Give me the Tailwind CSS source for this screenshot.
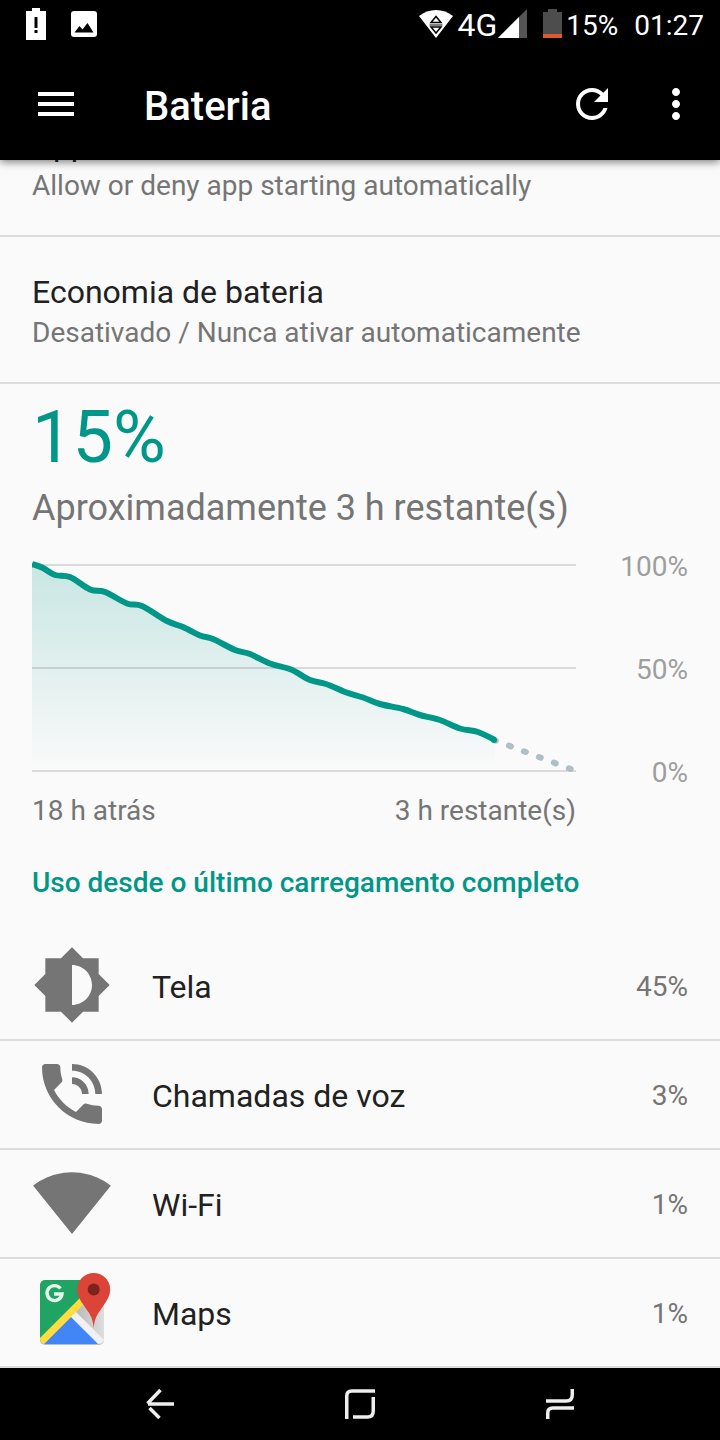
<!DOCTYPE html>
<html lang="pt-BR">
<head>
<meta charset="utf-8">
<meta name="viewport" content="width=device-width, initial-scale=1">
<title>Bateria</title>
<script src="https://cdn.jsdelivr.net/npm/@tailwindcss/browser@4"></script>
</head>
<body class="flex min-h-screen flex-col bg-[#fafafa] font-[Roboto,sans-serif] text-[#212121]">

  <div class="flex h-12 items-center bg-black pr-4 pl-6 text-[28px] leading-8 text-white">
    <svg class="h-8 w-6" viewBox="0 0 24 32" aria-hidden="true">
      <path fill="#fff" fill-rule="evenodd" d="M8 0h8v3h6v29H2V3h6zM10.500 9v11h3V9zM10.500 22v3h3v-3z"/>
    </svg>
    <svg class="ml-5 size-8" viewBox="0 0 32 32" aria-hidden="true">
      <rect x="3" y="3" width="26" height="26" rx="3" fill="#fff"/>
      <path d="M6.500 24.500l5-6.500 3 3.500 5-6.500 6 9.500z" fill="#000"/>
    </svg>
    <div class="ml-auto flex items-center">
      <svg class="h-8 w-9" viewBox="0 0 36 32" aria-hidden="true">
        <path fill="#fff" d="M18 30L1 8C10.500 0 25.500 0 35 8z"/>
        <path fill="none" stroke="#000" stroke-width="1.500" d="M13 14.500h10l-5-6zM13 19h10l-5 6z"/>
        <path stroke="#000" stroke-width="1" d="M11.500 17h13"/>
      </svg>
      <span class="ml-1 pt-0.5 text-[32px]">4G</span>
      <svg class="h-8 w-8" viewBox="0 0 32 32" aria-hidden="true">
        <path fill="#555" d="M30 1v29H1z"/>
        <path fill="#fff" d="M22 9v21H1z"/>
      </svg>
      <svg class="ml-3 h-8 w-6" viewBox="0 0 24 32" aria-hidden="true">
        <path fill="#4d4d4d" d="M7 1h9v3h5v26H2V4h5z"/>
        <path fill="#e0582f" d="M2 26h19v4H2z"/>
      </svg>
      <span class="ml-px pt-1">15%</span>
      <span class="ml-4 pt-1">01:27</span>
    </div>
  </div>

  <header class="relative z-10 flex h-28 items-center bg-black pr-5 pl-8 text-white shadow-[0_2px_8px_rgba(0,0,0,0.5)]">
    <button type="button" aria-label="Menu" class="size-12">
      <svg class="size-12" viewBox="0 0 24 24" fill="currentColor"><path d="M3 18h18v-2H3v2zm0-5h18v-2H3v2zm0-7v2h18V6H3z"/></svg>
    </button>
    <h1 class="ml-16 pt-1.5 text-[40px] leading-12 font-medium">Bateria</h1>
    <button type="button" aria-label="Atualizar" class="ml-auto size-12">
      <svg class="size-12" viewBox="0 0 24 24" fill="currentColor"><path d="M17.650 6.350C16.200 4.900 14.210 4 12 4c-4.420 0-7.990 3.580-7.990 8s3.570 8 7.990 8c3.730 0 6.840-2.550 7.730-6h-2.080c-.82 2.330-3.040 4-5.650 4-3.310 0-6-2.690-6-6s2.690-6 6-6c1.660 0 3.140.69 4.220 1.780L13 11h7V4l-2.350 2.350z"/></svg>
    </button>
    <button type="button" aria-label="Mais opções" class="ml-9 size-12">
      <svg class="size-12" viewBox="0 0 24 24" fill="currentColor"><path d="M12 8c1.100 0 2-.9 2-2s-.9-2-2-2-2 .9-2 2 .9 2 2 2zm0 2c-1.100 0-2 .9-2 2s.9 2 2 2 2-.9 2-2-.9-2-2-2zm0 6c-1.100 0-2 .9-2 2s.9 2 2 2 2-.9 2-2-.9-2-2-2z"/></svg>
    </button>
  </header>

  <main class="flex-1 overflow-hidden">
    <!-- The list is scrolled so that its first item is partly under the app bar -->
    <section class="-mt-[70px]">
      <div class="border-b-2 border-[#dcdcdc] px-8 pt-[35px] pb-7">
        <h2 class="text-[32px] leading-10">App</h2>
        <p class="text-[28px] leading-[42px] text-[#757575]">Allow or deny app starting automatically</p>
      </div>
      <div class="border-b-2 border-[#dcdcdc] px-8 pt-[35px] pb-7">
        <h2 class="text-[32px] leading-10">Economia de bateria</h2>
        <p class="text-[28px] leading-[42px] text-[#757575]">Desativado / Nunca ativar automaticamente</p>
      </div>
    </section>

    <section class="px-8 pt-3.5">
      <p class="text-[72px] leading-20 text-[#009688]">15%</p>
      <p class="pt-1.5 text-[36px] leading-12 text-[#757575]">Aproximadamente 3 h restante(s)</p>
      <div class="mt-[19px] flex">
        <svg class="min-w-0 flex-1" viewBox="0 0 544 238" role="img" aria-label="Nível da bateria nas últimas 18 horas">
          <defs>
            <linearGradient id="fade" gradientUnits="userSpaceOnUse" x1="0" y1="14" x2="0" y2="220">
              <stop offset="0" stop-color="#009688" stop-opacity="0.2"/>
              <stop offset="1" stop-color="#009688" stop-opacity="0"/>
            </linearGradient>
          </defs>
          <path d="M0 14H544M0 117H544M0 220H544" stroke="#dadada" stroke-width="2"/>
          <path id="area" fill="url(#fade)"/>
          <path d="M462 189L544 220" stroke="#b0bec5" stroke-width="6" stroke-linecap="round" stroke-dasharray="2 14"/>
          <path id="level" fill="none" stroke="#009688" stroke-width="6"/>
          <circle cx="462" cy="189" r="3" fill="#009688"/>
        </svg>
        <div class="flex w-28 flex-col justify-between text-right text-[28px] leading-8 text-[#9e9e9e]">
          <span>100%</span><span>50%</span><span>0%</span>
        </div>
      </div>
      <div class="mt-1.5 mr-28 flex justify-between text-[28px] leading-8 text-[#757575]">
        <span>18 h atrás</span><span>3 h restante(s)</span>
      </div>
    </section>

    <section>
      <h2 class="px-8 pt-10 pb-[33px] text-[28px] leading-8 font-medium text-[#009688]">Uso desde o último carregamento completo</h2>
      <ul class="text-[32px] leading-10">
        <li class="flex h-[109px] items-center gap-10 border-b-2 border-[#dcdcdc] px-8 pb-0.5">
          <svg class="size-20" viewBox="0 0 24 24" fill="#757575" aria-hidden="true"><path d="M20 15.310L23.310 12 20 8.690V4h-4.690L12 .69 8.690 4H4v4.690L.69 12 4 15.310V20h4.690L12 23.310 15.310 20H20v-4.690zM12 18V6c3.310 0 6 2.690 6 6s-2.690 6-6 6z"/></svg>
          <span class="flex-1 pt-1">Tela</span>
          <span class="pt-1 text-[28px] text-[#757575]">45%</span>
        </li>
        <li class="flex h-[109px] items-center gap-10 border-b-2 border-[#dcdcdc] px-8 pb-0.5">
          <svg class="size-20" viewBox="0 0 24 24" fill="#757575" aria-hidden="true"><path d="M20 15.500c-1.250 0-2.450-.2-3.570-.57-.35-.11-.74-.03-1.020.24l-2.200 2.200c-2.830-1.440-5.150-3.750-6.590-6.590l2.200-2.200c.28-.28.36-.67.25-1.020C8.700 6.450 8.500 5.250 8.500 4c0-.55-.45-1-1-1H4c-.55 0-1 .45-1 1 0 9.390 7.610 17 17 17 .55 0 1-.45 1-1v-3.500c0-.55-.45-1-1-1zM19 12h2c0-4.970-4.030-9-9-9v2c3.870 0 7 3.130 7 7zm-4 0h2c0-2.760-2.240-5-5-5v2c1.660 0 3 1.340 3 3z"/></svg>
          <span class="flex-1 pt-1">Chamadas de voz</span>
          <span class="pt-1 text-[28px] text-[#757575]">3%</span>
        </li>
        <li class="flex h-[109px] items-center gap-10 border-b-2 border-[#dcdcdc] px-8 pb-0.5">
          <svg class="size-20" viewBox="0 0 24 24" fill="#757575" aria-hidden="true"><path d="M12 21.300L23.640 6.800C23.190 6.460 18.710 2.800 12 2.800S.81 6.460.36 6.800z"/></svg>
          <span class="flex-1 pt-1">Wi-Fi</span>
          <span class="pt-1 text-[28px] text-[#757575]">1%</span>
        </li>
        <li class="flex h-[109px] items-center gap-10 border-b-2 border-[#dcdcdc] px-8 pb-0.5">
          <svg class="size-20" viewBox="0 0 80 80" aria-hidden="true">
            <defs>
              <clipPath id="card"><rect x="8" y="8" width="64" height="64" rx="5"/></clipPath>
              <linearGradient id="shade" x1="0" y1="0" x2="1" y2="0"><stop offset="0" stop-color="#b5b5b5"/><stop offset="1" stop-color="#dedede"/></linearGradient>
            </defs>
            <rect x="8" y="9" width="64" height="64" rx="5" fill="#bdbdbd"/>
            <g clip-path="url(#card)">
              <path fill="#1fa463" d="M8 8h64L8 72z"/>
              <path fill="url(#shade)" d="M72 8v64L40 40z"/>
              <path fill="#4285f4" d="M40 44L10 74h60z"/>
              <path stroke="#f1f1f1" stroke-width="7" d="M40 41L74 75"/>
              <path stroke="#ffdd3c" stroke-width="7" d="M54 25L6 73"/>
            </g>
            <path fill="none" stroke="#e8f5ee" stroke-width="3.400" d="M28.500 16.500A7.500 7.500 0 1 0 30 22h-8"/>
            <path fill="#db4437" d="M61.700 56c-1-12-5-15-9.500-22-3.500-5-7-10-7-16.500a16.500 16.500 0 0 1 33 0c0 6.500-3.500 11.500-7 16.500-4.500 7-8.500 10-9.500 22z"/>
            <circle cx="61.700" cy="17.500" r="6" fill="#7b231e"/>
          </svg>
          <span class="flex-1 pt-1">Maps</span>
          <span class="pt-1 text-[28px] text-[#757575]">1%</span>
        </li>
      </ul>
    </section>
  </main>

  <nav class="flex h-18 items-center bg-black px-15 pb-0.5 text-[#eeeeee]" aria-label="Navegação do sistema">
    <button type="button" aria-label="Voltar" class="flex flex-1 justify-center">
      <svg class="size-8" viewBox="0 0 32 32" fill="none" stroke="currentColor" stroke-width="3.500"><path d="M30 17H4M16.500 3L3.500 16.500M5.500 21l10 10"/></svg>
    </button>
    <button type="button" aria-label="Início" class="flex flex-1 justify-center">
      <svg class="size-8" viewBox="0 0 32 32" fill="none" stroke="currentColor" stroke-width="3.500"><path d="M2.750 32V9q0-5 5-5H31M9 30h14.500q5.750 0 5.750-6V10"/></svg>
    </button>
    <button type="button" aria-label="Recentes" class="flex flex-1 justify-center">
      <svg class="size-8" viewBox="0 0 32 32" fill="none" stroke="currentColor" stroke-width="3.500"><path d="M28.250 2v6q0 6-6 6H2M3.750 32v-6q0-5 5-5H30"/></svg>
    </button>
  </nav>

  <script>
    // Battery level samples in chart units, drawn as a smooth curve
    const p = [[0,13],[11,17],[23,24],[38,26],[58,38.500],[73,41],[95,52.500],[110,55],[135,70],[151,76],[168,84.500],[181,88],[203,99],[218,103],[238,112.500],[259,118.500],[278,129],[294,133],[313,141],[331,146.500],[348,153],[371,158],[388,164],[408,169],[428,177.500],[446,181],[463,189]];
    let d = `M${p[0]}`;
    for (let i = 0; i < p.length - 1; i++) {
      const a = p[i - 1] || p[i], b = p[i], c = p[i + 1], e = p[i + 2] || c;
      d += `C${b[0] + (c[0] - a[0]) / 6} ${b[1] + (c[1] - a[1]) / 6} ${c[0] - (e[0] - b[0]) / 6} ${c[1] - (e[1] - b[1]) / 6} ${c}`;
    }
    document.getElementById('level').setAttribute('d', d);
    document.getElementById('area').setAttribute('d', d + 'V220H0Z');
  </script>
</body>
</html>
